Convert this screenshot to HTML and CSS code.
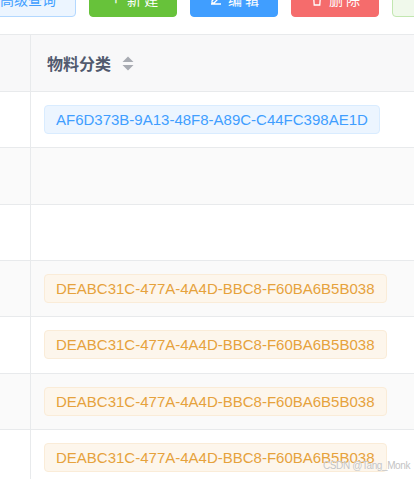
FILE: index.html
```html
<!DOCTYPE html>
<html lang="zh-CN">
<head>
<meta charset="utf-8">
<title>物料分类</title>
<link rel="stylesheet" href="styles.css">
</head>
<body>
<div class="page">
  <div class="toolbar">
    <button class="btn btn-query">
      <svg class="ico" viewBox="0 0 14 14" width="14" height="14"><circle cx="6" cy="6" r="4.5" fill="none" stroke="currentColor" stroke-width="1.4"/><path d="M9.3 9.3L13 13" stroke="currentColor" stroke-width="1.4"/></svg>
      <span>高级查询</span>
    </button>
    <button class="btn btn-success"><span class="plus">+</span><span>新 建</span></button>
    <button class="btn btn-primary">
      <svg class="ico" viewBox="0 0 14 14" width="14" height="14"><path d="M2 12h10M3 9l6-6 2 2-6 6H3z" fill="none" stroke="currentColor" stroke-width="1.3"/></svg>
      <span>编 辑</span>
    </button>
    <button class="btn btn-danger">
      <svg class="ico" viewBox="0 0 14 14" width="14" height="14"><path d="M2 3h10M5 3V1.5h4V3M3.5 3l.7 10h5.6l.7-10" fill="none" stroke="currentColor" stroke-width="1.3"/></svg>
      <span>删 除</span>
    </button>
    <button class="btn btn-export"><span>导 出</span></button>
  </div>

  <div class="table">
    <div class="row head">
      <div class="cell first"></div>
      <div class="cell main">
        <span class="th">物料分类</span>
        <svg class="sort" viewBox="0 0 12 15" width="12" height="15"><path d="M0.5 6L6 0.5L11.5 6Z M0.5 9L11.5 9L6 14.5Z" fill="#a8abb2"/></svg>
      </div>
    </div>
    <div class="row">
      <div class="cell first"></div>
      <div class="cell main"><span class="tag tag-blue">AF6D373B-9A13-48F8-A89C-C44FC398AE1D</span></div>
    </div>
    <div class="row stripe">
      <div class="cell first"></div>
      <div class="cell main"></div>
    </div>
    <div class="row">
      <div class="cell first"></div>
      <div class="cell main"></div>
    </div>
    <div class="row stripe">
      <div class="cell first"></div>
      <div class="cell main"><span class="tag tag-orange">DEABC31C-477A-4A4D-BBC8-F60BA6B5B038</span></div>
    </div>
    <div class="row">
      <div class="cell first"></div>
      <div class="cell main"><span class="tag tag-orange">DEABC31C-477A-4A4D-BBC8-F60BA6B5B038</span></div>
    </div>
    <div class="row stripe">
      <div class="cell first"></div>
      <div class="cell main"><span class="tag tag-orange">DEABC31C-477A-4A4D-BBC8-F60BA6B5B038</span></div>
    </div>
    <div class="row">
      <div class="cell first"></div>
      <div class="cell main"><span class="tag tag-orange">DEABC31C-477A-4A4D-BBC8-F60BA6B5B038</span></div>
    </div>
  </div>

  <div class="watermark">CSDN @Tang_Monk</div>
</div>
</body>
</html>
```

FILE: styles.css
```css
html, body {
  margin: 0;
  padding: 0;
  background: #fff;
}
body {
  width: 414px;
  height: 479px;
  overflow: hidden;
  font-family: "Liberation Sans", Arial, "Noto Sans CJK SC", sans-serif;
}
.page {
  position: relative;
  width: 414px;
  height: 479px;
  overflow: hidden;
}
.toolbar {
  display: flex;
  gap: 13px;
  margin-top: -20px;
  margin-left: -39px;
  height: 37px;
  white-space: nowrap;
}
.btn {
  flex: none;
  box-sizing: border-box;
  height: 37px;
  border-radius: 4px;
  border: 1px solid transparent;
  font-family: "Noto Sans CJK SC", sans-serif;
  font-size: 14px;
  display: flex;
  align-items: center;
  justify-content: center;
  gap: 5px;
  padding: 0 20px;
  color: #fff;
  line-height: 1;
}
.ico { flex: none; }
.plus { font-size: 15px; margin-right: 2px; }
.btn-query {
  width: 115px;
  background: #ecf5ff;
  border-color: #b3d8ff;
  color: #409eff;
}
.btn-success { width: 88px; background: #67c23a; border-color: #67c23a; padding-left: 24px; }
.btn-primary { width: 88px; background: #409eff; border-color: #409eff; }
.btn-danger { width: 88px; background: #f56c6c; border-color: #f56c6c; }
.btn-export {
  width: 88px;
  background: #f0f9eb;
  border-color: #c2e7b0;
  color: #67c23a;
}

.table {
  margin-top: 17px;
  width: 600px;
  border-top: 1px solid #e8eaec;
}
.row {
  display: flex;
  box-sizing: border-box;
  height: 56.33px;
  border-bottom: 1px solid #e8eaec;
  background: #fff;
}
.row.stripe { background: #fafafa; }
.row.head {
  height: 57px;
  background: #f8f8f9;
}
.cell {
  box-sizing: border-box;
  display: flex;
  align-items: center;
}
.cell.first {
  width: 31px;
  flex: none;
  border-right: 1px solid #e8eaec;
}
.cell.main {
  flex: 1;
  padding-left: 13px;
}
.head .cell.main { padding-left: 16px; gap: 11px; }
.th {
  font-family: "Noto Sans CJK SC", sans-serif;
  font-weight: bold;
  font-size: 16px;
  color: #515a6e;
}
.sort { flex: none; }

.tag {
  box-sizing: border-box;
  height: 29px;
  display: inline-flex;
  align-items: center;
  padding: 0 11px;
  border-radius: 4px;
  border: 1px solid;
  font-size: 15px;
  white-space: nowrap;
}
.tag-blue {
  background: #ecf5ff;
  border-color: #d9ecff;
  color: #409eff;
}
.tag-orange {
  background: #fdf6ec;
  border-color: #faecd8;
  color: #e6a23c;
}

.watermark {
  position: absolute;
  right: 4px;
  bottom: 8px;
  font-size: 10px;
  letter-spacing: -0.4px;
  color: #c4c4c4;
  text-shadow: 0 0 1px #fff;
  font-family: "Liberation Sans", Arial, sans-serif;
}
```
